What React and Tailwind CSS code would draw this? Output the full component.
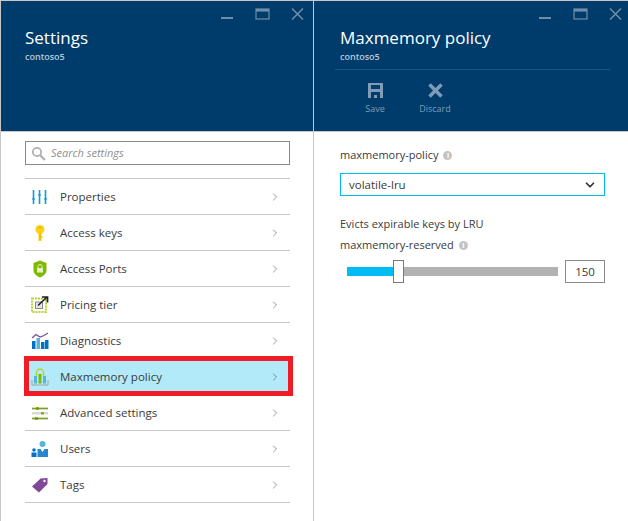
import { ChevronRight, ChevronDown } from 'lucide-react';

const font = { fontFamily: '"Open Sans", sans-serif' };

// Window buttons in the blade header
const WindowButtons = () => (
  <div className="flex justify-end items-start h-[10px] gap-[21px] pr-[9px]">
    <svg width="14" height="12" viewBox="0 0 14 12"><rect x="1" y="9" width="12" height="2" fill="#6f8eab" /></svg>
    <svg width="15" height="12" viewBox="0 0 15 12"><rect x="1" y="1" width="13" height="10" fill="none" stroke="#6f8eab" strokeWidth="1.2" /><rect x="1" y="1" width="13" height="2.6" fill="#6f8eab" /></svg>
    <svg width="13" height="12" viewBox="0 0 13 12"><path d="M1 0.5 L12 11.5 M12 0.5 L1 11.5" stroke="#6f8eab" strokeWidth="1.5" fill="none" /></svg>
  </div>
);

const icons = {
  properties: (
    <svg width="18" height="18" viewBox="0 0 18 18">
      <rect x="1" y="2" width="3" height="14" fill="#b3e0f2" /><rect x="7" y="2" width="3" height="14" fill="#b3e0f2" /><rect x="13" y="2" width="3" height="14" fill="#b3e0f2" />
      <rect x="1" y="10" width="3" height="2" fill="#59b4d9" /><rect x="7" y="6" width="3" height="2" fill="#59b4d9" /><rect x="13" y="10" width="3" height="2" fill="#59b4d9" />
      <rect x="2" y="2" width="1" height="14" fill="#7a7a7a" /><rect x="8" y="2" width="1" height="14" fill="#7a7a7a" /><rect x="14" y="2" width="1" height="14" fill="#7a7a7a" />
    </svg>
  ),
  keys: (
    <svg width="18" height="18" viewBox="0 0 18 18">
      <circle cx="9" cy="5.5" r="4.5" fill="#fcd116" /><rect x="7.5" y="8" width="3" height="9" fill="#fcd116" /><rect x="10" y="12" width="1.5" height="2" fill="#fcd116" />
      <rect x="7.5" y="3" width="3" height="1.2" fill="#e8a800" /><rect x="8.6" y="9" width="0.9" height="7" fill="#e8a800" />
    </svg>
  ),
  ports: (
    <svg width="18" height="18" viewBox="0 0 18 18">
      <path d="M9 0.5 L15.5 3 L15.5 10 C15.5 14 12 16 9 17.5 C6 16 2.500 14 2.500 10 L2.500 3 Z" fill="#7fba00" />
      <rect x="6" y="8" width="6" height="4.500" fill="#e6f2c4" /><path d="M7 8 V6.500 a2 2 0 0 1 4 0 V8" fill="none" stroke="#e6f2c4" strokeWidth="1" />
    </svg>
  ),
  pricing: (
    <svg width="18" height="18" viewBox="0 0 18 18">
      <rect x="1" y="2.500" width="14" height="13.500" fill="none" stroke="#b8d432" strokeWidth="2" strokeDasharray="2 1" />
      <rect x="4.500" y="6" width="7" height="6.500" fill="#e4e4e4" stroke="#8a8a8a" strokeWidth="1" />
      <path d="M7 9.500 L15.500 1.500 M11 1 H16.500 V6.500" fill="none" stroke="#222" strokeWidth="1.700" />
    </svg>
  ),
  diagnostics: (
    <svg width="18" height="18" viewBox="0 0 18 18">
      <rect x="1" y="9" width="3.500" height="8" fill="#0072c6" /><rect x="5.500" y="6" width="3.500" height="11" fill="#59b4d9" /><rect x="10" y="10" width="3.500" height="7" fill="#0072c6" /><rect x="14" y="8" width="3.500" height="9" fill="#0072c6" />
      <path d="M1 6 L5 2.500 L9 5 L13 3.500 L17 1" fill="none" stroke="#804998" strokeWidth="1.200" />
    </svg>
  ),
  maxmemory: (
    <svg width="18" height="18" viewBox="0 0 18 18">
      <path d="M5.500 8 V4.500 a3.500 3.500 0 0 1 7 0 V8" fill="none" stroke="#b8d432" strokeWidth="1.500" />
      <rect x="3" y="8" width="3" height="7.500" fill="#59b4d9" /><rect x="7.500" y="6" width="3" height="9.500" fill="#7fba00" /><rect x="12" y="8" width="3" height="7.500" fill="#59b4d9" />
      <path d="M1 12 V17 H17 V12" fill="none" stroke="#a0a0a0" strokeWidth="1" />
    </svg>
  ),
  advanced: (
    <svg width="18" height="18" viewBox="0 0 18 18">
      <rect x="1" y="3" width="16" height="3" fill="#cfe39a" /><rect x="1" y="8" width="16" height="2.500" fill="#d9d9d9" /><rect x="1" y="13" width="16" height="3" fill="#cfe39a" />
      <rect x="5" y="3" width="3" height="3" fill="#7fba00" /><rect x="10" y="8" width="3" height="2.500" fill="#7fba00" /><rect x="4" y="13" width="3" height="3" fill="#7fba00" />
      <rect x="1" y="4.200" width="16" height="0.800" fill="#6f7f4a" /><rect x="1" y="14.200" width="16" height="0.800" fill="#6f7f4a" />
    </svg>
  ),
  users: (
    <svg width="18" height="18" viewBox="0 0 18 18">
      <circle cx="11.500" cy="4" r="3" fill="#59b4d9" /><path d="M6.500 17 V9 H9.500 L11.500 12 L13.500 9 H17 V17 Z" fill="#0072c6" fill-opacity="0.85" />
      <circle cx="3" cy="10" r="1.800" fill="#0072c6" /><rect x="0.500" y="12.500" width="5" height="4.500" fill="#0072c6" />
    </svg>
  ),
  tags: (
    <svg width="18" height="18" viewBox="0 0 18 18">
      <path d="M1 10.500 L9.500 2.500 L16.500 2 L16.500 8 L8 16.500 Z" fill="#804998" /><circle cx="13.500" cy="5" r="1.200" fill="#fff" />
    </svg>
  ),
};

const rows = [
  ['Properties', 'properties'],
  ['Access keys', 'keys'],
  ['Access Ports', 'ports'],
  ['Pricing tier', 'pricing'],
  ['Diagnostics', 'diagnostics'],
  ['Maxmemory policy', 'maxmemory'],
  ['Advanced settings', 'advanced'],
  ['Users', 'users'],
  ['Tags', 'tags'],
];

const InfoDot = () => (
  <span className="inline-flex items-center justify-center w-[9px] h-[9px] ml-[5px] rounded-full bg-[#c4c4c4] text-white text-[7px] leading-none font-bold">i</span>
);

export default function App() {
  return (
    <div style={font} className="w-[628px] h-[521px] bg-white border-t border-l border-[#c8c8c8] flex overflow-hidden text-[#3a3a3a]">
      {/* Settings blade */}
      <div className="w-[313px] shrink-0 border-r border-[#c8c8c8] flex flex-col">
        <div className="h-[130px] bg-[#003c6b] pt-[7px] pl-[24px] pr-0">
          <WindowButtons />
          <h1 className="text-white text-[17px] leading-[24px] mt-[8px]">Settings</h1>
          <p className="text-[#b9c9d8] text-[9px] leading-[12px] mt-[1px] font-semibold">contoso5</p>
        </div>
        <div className="flex-1 border-t border-[#c8c8c8] px-[24px] pt-[9px]">
          <div className="h-[24px] w-[265px] border border-[#8a8a8a] flex items-center pl-[5px]">
            <svg width="15" height="15" viewBox="0 0 15 15">
              <circle cx="6" cy="6" r="4.200" fill="none" stroke="#b0b0b0" strokeWidth="1.800" />
              <path d="M9 9 L14 14" stroke="#b0b0b0" strokeWidth="2.200" />
            </svg>
            <span className="ml-[5px] italic text-[11px] text-[#8f8f8f]">Search settings</span>
          </div>
          <ul className="w-[265px] mt-[13px] border-t border-[#c8c8c8]">
            {rows.map(([label, icon]) => {
              const active = label === 'Maxmemory policy';
              return (
                <li key={label} className={`relative h-[36px] border-b border-[#c8c8c8] flex items-center pl-[6px] pr-[9px] ${active ? 'bg-[#b3eafa]' : ''}`}>
                  <span className="w-[18px] h-[18px] flex shrink-0">{icons[icon]}</span>
                  <span className="ml-[11px] text-[11.500px] flex-1">{label}</span>
                  <ChevronRight size={12} strokeWidth={1.200} className="text-[#555]" />
                  {active && <div className="absolute left-[-1px] top-[-3px] w-[269px] h-[40px] border-[5px] border-[#ee1c25]" />}
                </li>
              );
            })}
          </ul>
        </div>
      </div>

      {/* Maxmemory policy blade */}
      <div className="flex-1 flex flex-col">
        <div className="h-[130px] bg-[#003c6b] pt-[7px]">
          <WindowButtons />
          <div className="pl-[26px]">
            <h1 className="text-white text-[17px] leading-[24px] mt-[8px]">Maxmemory policy</h1>
            <p className="text-[#b9c9d8] text-[9px] leading-[12px] mt-[1px] font-semibold">contoso5</p>
          </div>
          <div className="mx-[21px] mt-[6px] border-t border-[#1f5583] flex pt-[12px] pl-[10px]">
            <div className="w-[60px] flex flex-col items-center">
              <svg width="17" height="17" viewBox="0 0 17 17">
                <path d="M1 1 H16 V16 H1 Z M4 3 V7 H13 V3 Z M4 10 V16 H7 V13 H10 V16 H13 V10 Z" fill="#7f9bb5" fillRule="evenodd" />
              </svg>
              <span className="text-[9px] text-[#7f9bb5] mt-[3px]">Save</span>
            </div>
            <div className="w-[60px] flex flex-col items-center">
              <svg width="17" height="17" viewBox="0 0 17 17">
                <path d="M2.500 2.500 L14.500 14.500 M14.500 2.500 L2.500 14.500" stroke="#7f9bb5" strokeWidth="3.500" fill="none" />
              </svg>
              <span className="text-[9px] text-[#7f9bb5] mt-[3px]">Discard</span>
            </div>
          </div>
        </div>
        <div className="flex-1 border-t border-[#c8c8c8] px-[26px] pt-[14px]">
          <div className="text-[11px] leading-[18px] flex items-center">maxmemory-policy<InfoDot /></div>
          <div className="mt-[9px] w-[265px] h-[23px] border border-[#00bcf2] flex items-center justify-between pl-[8px] pr-[7px] text-[11.500px]">
            volatile-lru
            <ChevronDown size={14} strokeWidth={3} className="text-[#333]" />
          </div>
          <div className="mt-[19px] text-[11px] leading-[18px]">Evicts expirable keys by LRU</div>
          <div className="mt-[3px] text-[11px] leading-[18px] flex items-center">maxmemory-reserved<InfoDot /></div>
          <div className="flex items-center mt-[6px] pl-[7px]">
            <div className="relative w-[211px] h-[9px] bg-[#b2b2b2]">
              <div className="h-full w-[46px] bg-[#00bcf2]" />
              <div className="absolute left-[46px] top-[-7px] w-[11px] h-[23px] bg-white border border-[#7a7a7a]" />
            </div>
            <div className="ml-[7px] w-[40px] h-[23px] border border-[#8a8a8a] flex items-center justify-center text-[11.500px]">150</div>
          </div>
        </div>
      </div>
    </div>
  );
}
